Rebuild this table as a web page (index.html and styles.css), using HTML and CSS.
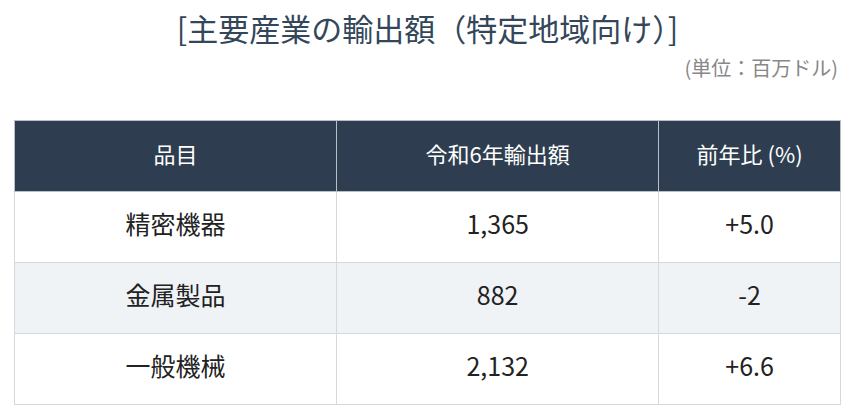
FILE: index.html
```html
<!DOCTYPE html>
<html lang="ja">
<head>
<meta charset="utf-8">
<link rel="stylesheet" href="styles.css">
</head>
<body>
<div class="page">
  <h1 class="title">[主要産業の輸出額（特定地域向け）]</h1>
  <div class="unit">(単位：百万ドル)</div>
  <table class="data">
    <colgroup>
      <col class="c1"><col class="c2"><col class="c3">
    </colgroup>
    <thead>
      <tr><th>品目</th><th>令和6年輸出額</th><th>前年比 (%)</th></tr>
    </thead>
    <tbody>
      <tr><td>精密機器</td><td>1,365</td><td>+5.0</td></tr>
      <tr class="alt"><td>金属製品</td><td>882</td><td>-2</td></tr>
      <tr><td>一般機械</td><td>2,132</td><td>+6.6</td></tr>
    </tbody>
  </table>
</div>
</body>
</html>
```

FILE: styles.css
```css
html, body {
  margin: 0;
  padding: 0;
  background: #ffffff;
}
body {
  font-family: "Noto Sans CJK JP", "Noto Sans", sans-serif;
  color: #222;
}
.page {
  padding: 0 13px 0 14px;
}
.title {
  margin: 0;
  padding-top: 6px;
  font-size: 31px;
  font-weight: 400;
  line-height: 44px;
  color: #34475a;
  text-align: center;
}
.unit {
  text-align: right;
  font-size: 20px;
  line-height: 24px;
  color: #888;
  margin-top: 6px;
  padding-right: 3px;
}
.data {
  width: 100%;
  border-collapse: collapse;
  margin-top: 40px;
  table-layout: fixed;
}
.c1 { width: 39%; }
.c2 { width: 39%; }
.c3 { width: 22%; }
.data th, .data td {
  border: 1px solid #d5d9de;
  height: 62px;
  padding: 0 0 8px;
  text-align: center;
  vertical-align: middle;
}
.data th {
  background: #2e3e50;
  color: #ffffff;
  font-weight: 400;
  font-size: 22px;
  border-color: #b8bfc7;
  height: 64px;
  padding-bottom: 6px;
}
.data td {
  font-size: 25px;
  color: #222;
}
.data tr.alt td {
  background: #f0f3f6;
}
```
